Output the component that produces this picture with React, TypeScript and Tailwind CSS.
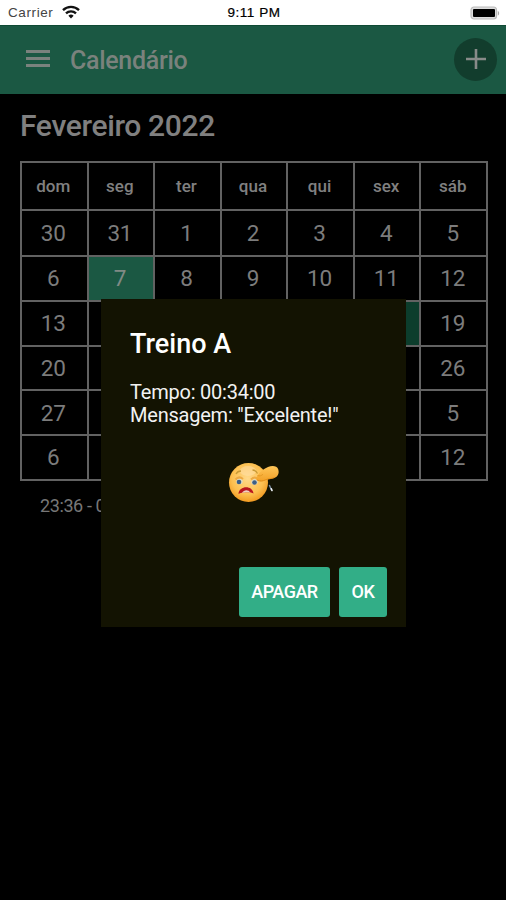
import { useState } from "react";
import clsx from "clsx";

const WEEK_DAYS = ["dom", "seg", "ter", "qua", "qui", "sex", "sáb"];

const WEEKS = [
  [30, 31, 1, 2, 3, 4, 5],
  [6, 7, 8, 9, 10, 11, 12],
  [13, 14, 15, 16, 17, 18, 19],
  [20, 21, 22, 23, 24, 25, 26],
  [27, 28, 1, 2, 3, 4, 5],
  [6, 7, 8, 9, 10, 11, 12],
];

function StatusBar() {
  return (
    <div className="grid h-[25px] grid-cols-3 items-center bg-white pt-px pr-[6px] pl-2 font-['Liberation_Sans',sans-serif] text-[13px] leading-none text-black">
      <div className="flex items-center gap-[5px]">
        <span className="w-[49px] text-[13.5px] tracking-[0.6px] text-[#444]">Carrier</span>
        <svg className="mb-[2px] h-[14px] w-[18px]" viewBox="0 0 18 14" fill="none" stroke="#111" strokeWidth="2.3">
          <path d="M1 5.1a11.3 11.3 0 0 1 16 0" />
          <path d="M4 8.4a7.1 7.1 0 0 1 10 0" />
          <path d="M9 13.4 6.4 10.8a3.7 3.7 0 0 1 5.2 0Z" fill="#111" stroke="none" />
        </svg>
      </div>
      <span className="text-center text-[13.5px] tracking-[0.55px] [-webkit-text-stroke:0.2px_#000]">9:11 PM</span>
      <svg className="h-[15px] w-[30px] justify-self-end" viewBox="0 0 30 15">
        <rect x="1" y="1" width="25.5" height="12" rx="3" fill="#ddd" stroke="#bbb" strokeWidth="1.2" />
        <rect x="3" y="3" width="22" height="8" rx="1" fill="#000" />
        <path d="M27.8 5v4.6c1.8-.7 1.8-3.9 0-4.6Z" fill="#aaa" />
      </svg>
    </div>
  );
}

function Header() {
  return (
    <header className="flex h-[69px] items-center border-t border-[#0f4a34] bg-[#1b5843] pr-[9px] pl-[26px]">
      <button aria-label="Menu" className="mb-[3px] flex w-6 flex-col gap-1">
        <span className="h-[3px] bg-[#7a827d]" />
        <span className="h-[3px] bg-[#7a827d]" />
        <span className="h-[3px] bg-[#7a827d]" />
      </button>
      <h1 className="ml-5 text-[25px] leading-none font-medium tracking-[-0.3px] text-[#7a827d]">Calendário</h1>
      <button aria-label="Adicionar" className="mb-px ml-auto grid size-[43px] place-items-center rounded-full bg-[#123d2d]">
        <svg className="mb-px size-5" viewBox="0 0 20 20" stroke="#888b89" strokeWidth="2.6">
          <path d="M10 0v20M0 10h20" />
        </svg>
      </button>
    </header>
  );
}

function Calendar() {
  return (
    <div className="mt-[17px] ml-5 grid h-[320px] w-[468px] grid-cols-7 grid-rows-[46px_44px_repeat(5,minmax(0,1fr))] gap-[2px] bg-[#626262] p-[2px]">
      {WEEK_DAYS.map((day) => (
        <div
          key={day}
          className="flex items-center justify-center bg-black pt-px pr-[2px] text-[17px] font-medium text-[#808080]"
        >
          {day}
        </div>
      ))}
      {WEEKS.map((week, row) =>
        week.map((day, col) => (
          <div
            key={`${row}-${col}`}
            className={clsx(
              "flex items-center justify-center pr-[2px] text-[22.5px] leading-none tracking-[-0.2px]",
              row === 1 && col === 1 ? "bg-[#1b5843] text-[#808a85]" : "text-[#7c7c7c]",
              row === 2 && col === 5 && "bg-[#0c3d2c]",
              !(row === 1 && col === 1) && !(row === 2 && col === 5) && "bg-black",
            )}
          >
            {day}
          </div>
        )),
      )}
    </div>
  );
}

function SadFace() {
  return (
    <svg className="h-[44px] w-[54px]" viewBox="0 0 54 44">
      <defs>
        <radialGradient id="face" cx="0.48" cy="0.4" r="0.62">
          <stop offset="0" stopColor="#ffd98a" />
          <stop offset="0.65" stopColor="#fdc050" />
          <stop offset="1" stopColor="#f0961c" />
        </radialGradient>
        <linearGradient id="hand" x1="0" y1="0" x2="0" y2="1">
          <stop offset="0" stopColor="#ffc658" />
          <stop offset="1" stopColor="#f2a027" />
        </linearGradient>
      </defs>
      <circle cx="20.5" cy="21.5" r="19.5" fill="url(#face)" />
      <ellipse cx="20" cy="10" rx="8" ry="5" fill="#ffe2ae" opacity="0.5" />
      <path d="M8 13c1-2 2.500-3 5-3M24.500 9c3 0 4 1.500 5 3.500" fill="none" stroke="#c99a35" strokeWidth="1.3" />
      <ellipse cx="11.5" cy="20.5" rx="3.2" ry="2.8" fill="#dedac4" />
      <ellipse cx="26.5" cy="21" rx="3.2" ry="2.8" fill="#dedac4" />
      <circle cx="11" cy="21" r="2.3" fill="#3d5f86" />
      <circle cx="26.5" cy="21.500" r="2.3" fill="#3d5f86" />
      <path d="M7.500 18.500q3.500-4 7.500-.5M23 18.500q4-4 7 0" fill="none" stroke="#eca944" strokeWidth="2" />
      <path d="M10.500 33c.5-8.500 14-9 15-.5-2.500-1.800-12-1.800-15 .5Z" fill="#b9151e" />
      <path d="M14 32c2-3.500 6.500-3.500 8.500-.2-2-.7-6.500-.7-8.500.2Z" fill="#eed0c4" />
      <path
        d="M30 14c2-3.500 6-6.500 10-8 4-1.500 9-1.500 10.300 2.500 1.300 4.500-1 8-5.500 9-4 .8-5.500.8-8 2-3 1.500-7 1.200-8.200-1-.6-1.400.2-3 1.400-4.500Z"
        fill="url(#hand)"
      />
      <path d="M29 19c3 1.500 6 1.200 9-.4 2.500-1 5.500-.7 8.500-2.200" fill="none" stroke="#df8a18" strokeWidth="0.8" />
      <path d="M29.500 14.500c2 .8 4 .3 5.500-1.200" fill="none" stroke="#df9420" strokeWidth="0.8" />
      <path d="m41.500 24.500 2 4.500" stroke="#7b8c9f" strokeWidth="1.5" strokeLinecap="round" />
      <path d="m43.300 27.800.7 1.700" stroke="#f3f6fa" strokeWidth="1.6" strokeLinecap="round" />
    </svg>
  );
}

function WorkoutDialog({ onClose }: { onClose: () => void }) {
  return (
    <div
      role="dialog"
      className="absolute top-[299px] left-[101px] flex h-[328px] w-[305px] flex-col bg-[#131302] pt-[30px] pr-[19px] pb-[10px] pl-[29px] text-white"
    >
      <h3 className="text-[27px] leading-[30px] font-medium">Treino A</h3>
      <div className="mt-[22px] text-[20px] leading-[23px] tracking-[-0.22px] text-[#f2f2f2]">
        <p>Tempo: 00:34:00</p>
        <p>Mensagem: "Excelente!"</p>
      </div>
      <div className="mt-[34px] ml-[98px]">
        <SadFace />
      </div>
      <div className="mt-auto flex justify-end gap-[9px] text-[18px] font-medium tracking-[-0.5px]">
        <button onClick={onClose} className="h-[50px] w-[91px] rounded-[3px] bg-[#32ae87] pb-px">
          APAGAR
        </button>
        <button onClick={onClose} className="h-[50px] w-[48px] rounded-[3px] bg-[#32ae87] pb-px">
          OK
        </button>
      </div>
    </div>
  );
}

export default function App() {
  const [open, setOpen] = useState(true);

  return (
    <div className="relative h-[900px] w-[506px] overflow-hidden bg-black font-['Roboto',sans-serif]">
      <StatusBar />
      <Header />
      <main>
        <h2 className="mt-[14px] ml-5 h-9 text-[30px] leading-9 font-medium tracking-[-0.35px] text-[#808080]">
          Fevereiro 2022
        </h2>
        <Calendar />
        <p className="mt-[13px] ml-10 text-[18px] leading-6 tracking-[-0.4px] text-[#777]">23:36 - 00:34</p>
      </main>
      {open && <WorkoutDialog onClose={() => setOpen(false)} />}
    </div>
  );
}
